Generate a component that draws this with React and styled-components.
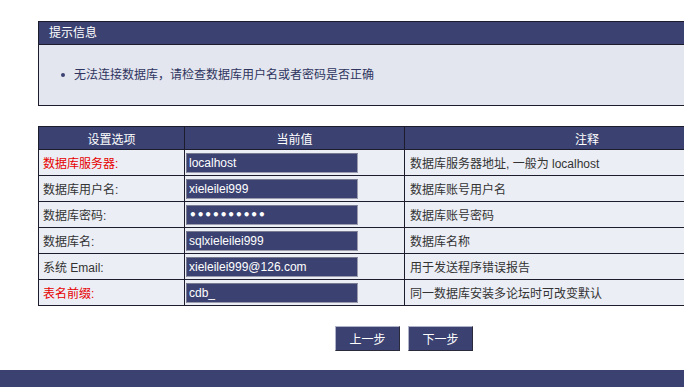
import React from "react";
import styled, { createGlobalStyle } from "styled-components";

const navy = "#3b4272";
const font = `Tahoma, "Liberation Sans", "Noto Sans CJK SC", sans-serif`;

const Global = createGlobalStyle`
  html, body { margin: 0; padding: 0; background: #fff; overflow: hidden; }
  body { font-family: ${font}; font-size: 12px; color: #333; }
`;

const Page = styled.div`
  width: 684px;
  height: 387px;
  overflow: hidden;
  display: flex;
  flex-direction: column;
`;

const Main = styled.div`
  margin-left: 38px;
  width: 732px;
  padding-top: 21px;
  display: flex;
  flex-direction: column;
`;

const InfoBox = styled.div`
  border: 1px solid #1c1c2c;
  background: #e4e6ef;
`;

const InfoHead = styled.div`
  height: 22px;
  line-height: 22px;
  background: ${navy};
  color: #fff;
  padding-left: 10px;
  border-bottom: 1px solid #1c1c2c;
`;

const InfoBody = styled.ul`
  margin: 0;
  height: 60px;
  padding: 0 0 0 22px;
  display: flex;
  flex-direction: column;
  justify-content: center;
`;

const InfoItem = styled.li`
  list-style: none;
  color: #2f3560;
  line-height: 16px;
  display: flex;
  align-items: center;
  gap: 9px;
  &::before {
    content: "";
    width: 4px;
    height: 4px;
    border-radius: 50%;
    background: ${navy};
    flex: none;
  }
`;

const Table = styled.table`
  margin-top: 20px;
  width: 732px;
  border-collapse: collapse;
  border: 1px solid #1c1c2c;
  table-layout: fixed;
`;

const Th = styled.th`
  background: ${navy};
  color: #fff;
  font-weight: normal;
  height: 22px;
  padding: 0;
  border: 1px solid #1c1c2c;
  text-align: center;
`;

const Td = styled.td`
  background: #eceef5;
  height: 25px;
  padding: 0 0 0 ${(p) => p.$pad}px;
  border: 1px solid #1c1c2c;
  color: ${(p) => (p.$red ? "#e60000" : "#333")};
  white-space: nowrap;
`;

const Input = styled.input`
  display: block;
  box-sizing: border-box;
  width: 172px;
  height: 20px;
  margin: 0;
  padding: 0 2px;
  background: ${navy};
  color: #fff;
  border: 1px solid #9a9cae;
  border-top-color: #777a90;
  border-left-color: #777a90;
  font-family: ${(p) => (p.type === "password" ? `"DejaVu Sans", sans-serif` : font)};
  font-size: 12px;
  font-weight: ${(p) => (p.type === "password" ? "bold" : "normal")};
  outline: none;
`;

const Buttons = styled.div`
  margin-top: 20px;
  display: flex;
  justify-content: center;
  gap: 8px;
`;

const Button = styled.button`
  width: 65px;
  height: 25px;
  background: ${navy};
  color: #fff;
  font-family: ${font};
  font-size: 12px;
  border: 1px solid;
  border-color: #b0b3c8 #2a2a3a #2a2a3a #b0b3c8;
  padding: 0;
  cursor: pointer;
`;

const Footer = styled.div`
  margin-top: 19px;
  height: 17px;
  background: ${navy};
  flex: none;
`;

const rows = [
  { label: "数据库服务器:", red: true, value: "localhost", note: "数据库服务器地址, 一般为 localhost" },
  { label: "数据库用户名:", value: "xieleilei999", note: "数据库账号用户名" },
  { label: "数据库密码:", value: "xieleilei9", type: "password", note: "数据库账号密码" },
  { label: "数据库名:", value: "sqlxieleilei999", note: "数据库名称" },
  { label: "系统 Email:", value: "xieleilei999@126.com", note: "用于发送程序错误报告" },
  { label: "表名前缀:", red: true, value: "cdb_", note: "同一数据库安装多论坛时可改变默认" },
];

export default function App() {
  return (
    <Page>
      <Global />
      <Main>
        <InfoBox>
          <InfoHead>提示信息</InfoHead>
          <InfoBody>
            <InfoItem>无法连接数据库，请检查数据库用户名或者密码是否正确</InfoItem>
          </InfoBody>
        </InfoBox>
        <Table>
          <colgroup>
            <col style={{ width: 146 }} />
            <col style={{ width: 220 }} />
            <col />
          </colgroup>
          <thead>
            <tr>
              <Th>设置选项</Th>
              <Th>当前值</Th>
              <Th>注释</Th>
            </tr>
          </thead>
          <tbody>
            {rows.map((r) => (
              <tr key={r.label}>
                <Td $pad={4} $red={r.red}>{r.label}</Td>
                <Td $pad={1}>
                  <Input type={r.type || "text"} defaultValue={r.value} />
                </Td>
                <Td $pad={5}>{r.note}</Td>
              </tr>
            ))}
          </tbody>
        </Table>
        <Buttons>
          <Button>上一步</Button>
          <Button>下一步</Button>
        </Buttons>
      </Main>
      <Footer />
    </Page>
  );
}
